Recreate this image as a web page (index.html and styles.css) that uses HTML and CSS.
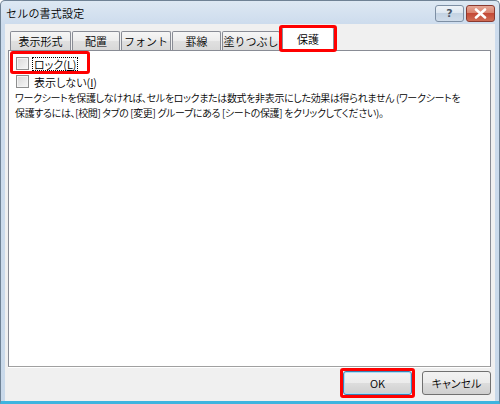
FILE: index.html
```html
<!DOCTYPE html>
<html lang="ja">
<head>
    <meta charset="UTF-8">
    <title>セルの書式設定</title>
    <link rel="stylesheet" href="styles.css">
</head>
<body>

    <div class="window">
        <div class="titlebar">
            <span class="title">セルの書式設定</span>
            <div class="caption">
                <div class="cap help">?</div>
                <div class="cap close">
                    <svg width="13" height="11" viewBox="0 0 13 11">
                        <path d="M2 1.5 L11 9.5 M11 1.5 L2 9.5" stroke="#fff" stroke-width="2.6" stroke-linecap="round"/>
                    </svg>
                </div>
            </div>
        </div>

        <div class="client">
            <div class="tabs">
                <div class="tab w1">表示形式</div>
                <div class="tab w2">配置</div>
                <div class="tab w3">フォント</div>
                <div class="tab w4">罫線</div>
                <div class="tab w5">塗りつぶし</div>
                <div class="tab active">保護<span class="mark"></span></div>
            </div>

            <div class="panel">
                <div class="check first">
                    <span class="box"></span>
                    <span class="label focus">ロック(<u>L</u>)</span>
                    <span class="mark"></span>
                </div>
                <div class="check">
                    <span class="box"></span>
                    <span class="label">表示しない(<u>I</u>)</span>
                </div>
                <p class="note">ワークシートを保護しなければ、セルをロックまたは数式を非表示にした効果は得られません (ワークシートを<br>保護するには、[校閲] タブの [変更] グループにある [シートの保護] をクリックしてください)。</p>
            </div>

            <div class="footer">
                <div class="btn default">OK<span class="mark"></span></div>
                <div class="btn">キャンセル</div>
            </div>
        </div>
    </div>

</body>
</html>
```

FILE: styles.css
```css
body {
    margin: 0;
    font-family: "Noto Sans CJK JP", "Noto Sans", sans-serif;
    font-size: 11px;
    color: #000;
}
.window {
    width: 500px;
    height: 404px;
    box-sizing: border-box;
    display: flex;
    flex-direction: column;
    padding: 0 4px;
    border: 1px solid #6f8295;
    border-bottom: 3px solid #3fb4df;
    border-radius: 5px 5px 0 0;
    background: linear-gradient(to bottom, #dde8f3, #cddced 23px, #c9d9ea);
}
.titlebar {
    height: 23px;
    flex: none;
    display: flex;
    justify-content: space-between;
    align-items: flex-start;
}
.title {
    font-size: 11px;
    line-height: 14px;
    padding: 5px 0 0 1px;
    letter-spacing: 0.2px;
    font-weight: 350;
}
.caption {
    display: flex;
    gap: 2px;
    padding-top: 4px;
}
.cap {
    height: 15px;
    border-radius: 3px;
    display: flex;
    justify-content: center;
    align-items: center;
}
.help {
    width: 27px;
    border: 1px solid #7d8fa4;
    background: linear-gradient(to bottom, #eef3f8, #dce6f0 50%, #c4d3e3 50%, #cfdcea);
    font-family: "DejaVu Sans", sans-serif;
    font-weight: bold;
    font-size: 11px;
    color: #4a5666;
}
.close {
    width: 27px;
    border: 1px solid #8a3a30;
    background: linear-gradient(to bottom, #e7a897, #d8806c 50%, #c44a37 50%, #d06d55);
}
.client {
    flex: 1;
    background: #f0f0f0;
    display: flex;
    flex-direction: column;
    padding: 3px 4px 0 3px;
    font-weight: 350;
}
.tabs {
    height: 23px;
    flex: none;
    display: flex;
    align-items: flex-end;
    padding-left: 2px;
    position: relative;
    z-index: 1;
}
.tab {
    height: 18px;
    border: 1px solid #898c95;
    border-bottom: none;
    border-radius: 2px 2px 0 0;
    margin-right: 1px;
    background: linear-gradient(to bottom, #f6f6f6, #ececec 50%, #e0e0e0 51%, #d8d8d8);
    text-align: center;
    line-height: 18px;
}
.w1 { width: 59px; }
.w2 { width: 46px; }
.w3 { width: 48px; }
.w4 { width: 47px; }
.w5 { width: 56px; }
.tab.active {
    position: relative;
    width: 50px;
    height: 23px;
    line-height: 22px;
    margin-left: 1px;
    margin-bottom: -1px;
    background: #fff;
}
.panel {
    box-sizing: border-box;
    height: 317px;
    flex: none;
    background: #fff;
    border: 1px solid #898c95;
    border-bottom-color: #a0a0a0;
    box-shadow: 0 1px 0 #fff;
    padding: 6px 7px 0;
}
.check {
    display: flex;
    align-items: center;
    gap: 3px;
    height: 13px;
    margin-bottom: 5px;
    position: relative;
    width: max-content;
}
.box {
    width: 11px;
    height: 11px;
    border: 1px solid #8e8f8f;
    background: linear-gradient(135deg, #d9d9d9, #f7f7f7);
    box-shadow: inset 0 0 0 1px #f4f4f4;
}
.label {
    font-feature-settings: "palt";
    line-height: 12px;
    padding: 0 1px;
    border: 1px dotted transparent;
}
.label.focus {
    border-color: #000;
}
.note {
    margin: -2px 0 0 -1px;
    line-height: 14.5px;
    font-size: 10px;
    white-space: nowrap;
    font-feature-settings: "palt";
    letter-spacing: -0.35px;
}
.footer {
    display: flex;
    justify-content: flex-end;
    gap: 10px;
    padding-top: 4px;
}
.btn {
    position: relative;
    width: 67px;
    height: 22px;
    border: 1px solid #707070;
    border-radius: 3px;
    background: linear-gradient(to bottom, #f2f2f2, #ebebeb 50%, #dddddd 50%, #cfcfcf);
    display: flex;
    justify-content: center;
    align-items: center;
    font-feature-settings: "palt";
}
.btn.default {
    border-color: #3c7fb1;
    box-shadow: inset 0 0 0 1px #a9dcf5;
}
.mark {
    position: absolute;
    top: -4px;
    left: -4px;
    right: -4px;
    bottom: -4px;
    border: 3px solid #f00;
    border-radius: 3px;
    pointer-events: none;
}
.tab.active .mark {
    top: -3px;
    left: -4px;
    right: -4px;
    bottom: -1px;
}
.check .mark {
    top: -6px;
    left: -6px;
    right: -12px;
    bottom: -4px;
}
```
